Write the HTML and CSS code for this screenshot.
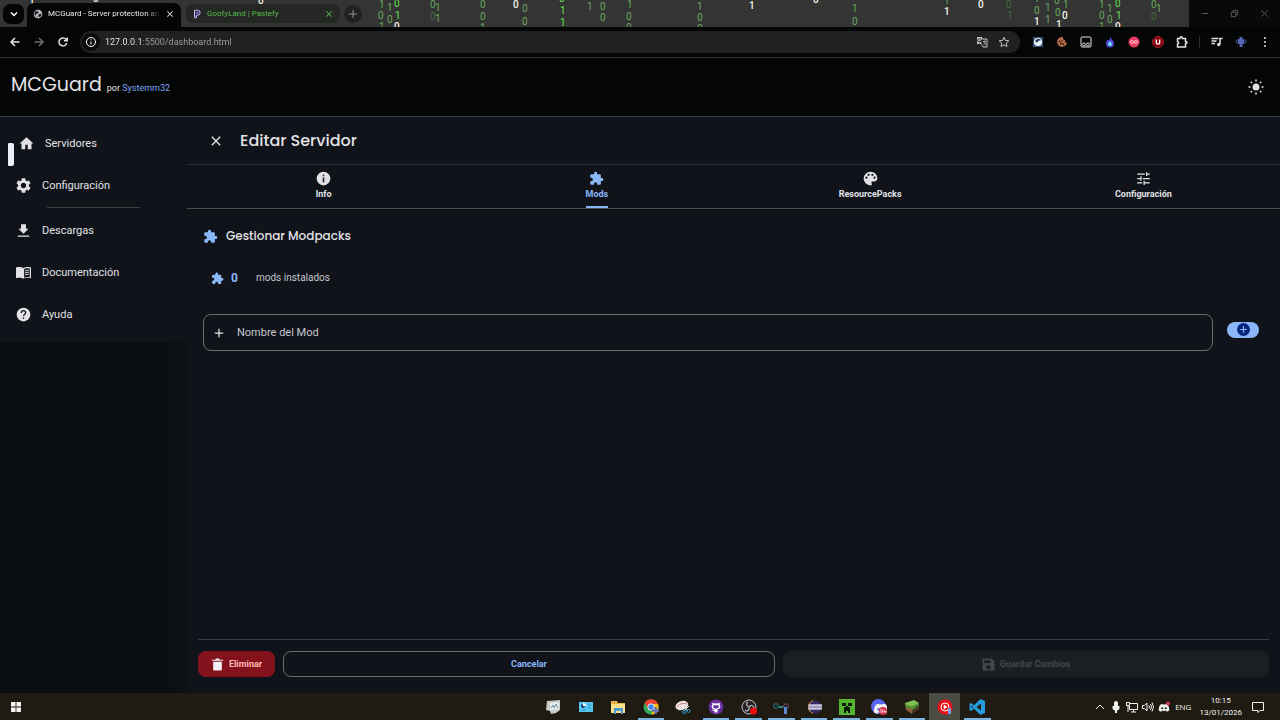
FILE: index.html
```html
<!DOCTYPE html>
<html lang="es">
<head>
    <meta charset="UTF-8">
    <meta name="viewport" content="width=device-width, initial-scale=1.0">
    <title>MCGuard - Server protection</title>
    <link rel="stylesheet" href="styles.css">
</head>
<body>
    <!-- Shared icons -->
    <svg class="sprite" aria-hidden="true">
        <symbol id="puzzle" viewBox="0 0 24 24"><path d="M20.5 11H19V7c0-1.100-.9-2-2-2h-4V3.500C13 2.120 11.880 1 10.500 1S8 2.120 8 3.500V5H4c-1.100 0-1.990.9-1.990 2v3.800H3.500c1.490 0 2.700 1.210 2.700 2.700s-1.210 2.700-2.700 2.700H2V20c0 1.100.9 2 2 2h3.800v-1.500c0-1.490 1.210-2.700 2.700-2.700s2.700 1.210 2.700 2.700V22H17c1.100 0 2-.9 2-2v-4h1.500c1.380 0 2.500-1.120 2.500-2.500S21.880 11 20.500 11z"/></symbol>
        <symbol id="gear" viewBox="2 2 20 20"><path d="M19.140 12.940c.04-.3.06-.61.06-.94 0-.32-.02-.64-.07-.94l2.030-1.580c.18-.14.23-.41.12-.61l-1.920-3.320c-.12-.22-.37-.29-.59-.22l-2.390.96c-.5-.38-1.030-.7-1.620-.94l-.36-2.540c-.04-.24-.24-.41-.48-.41h-3.840c-.24 0-.43.17-.47.41l-.36 2.540c-.59.24-1.130.57-1.620.94l-2.390-.96c-.22-.08-.47 0-.59.22L2.740 8.870c-.12.21-.08.47.12.61l2.030 1.580c-.05.3-.09.63-.09.94s.02.64.07.94l-2.030 1.580c-.18.14-.23.41-.12.61l1.920 3.320c.12.22.37.29.59.22l2.390-.96c.5.38 1.030.7 1.620.94l.36 2.540c.05.24.24.41.48.41h3.840c.24 0 .44-.17.47-.41l.36-2.540c.59-.24 1.130-.56 1.620-.94l2.390.96c.22.08.47 0 .59-.22l1.920-3.320c.12-.22.07-.47-.12-.61l-2.010-1.580zM12 15.600c-1.980 0-3.600-1.620-3.600-3.600s1.620-3.600 3.600-3.600 3.600 1.620 3.600 3.600-1.620 3.600-3.600 3.600z"/></symbol>
        <symbol id="close" viewBox="0 0 24 24"><path d="M19 6.410L17.590 5 12 10.590 6.410 5 5 6.410 10.590 12 5 17.590 6.410 19 12 13.410 17.590 19 19 17.590 13.410 12z"/></symbol>
        <symbol id="discord" viewBox="0 0 24 24"><path d="M19.500 5.300A17 17 0 0 0 15.300 4l-.6 1.200a15 15 0 0 0-5.400 0L8.700 4a17 17 0 0 0-4.200 1.300C1.800 9.300 1.100 13.200 1.500 17a17 17 0 0 0 5.200 2.600l1.200-2-1.800-.9.400-.3a12 12 0 0 0 11 0l.4.3-1.800.9 1.200 2a17 17 0 0 0 5.200-2.600c.4-4.400-.8-8.200-3-11.700zM8.500 14.600a2 2 0 1 1 0-4.200 2 2 0 0 1 0 4.200zm7 0a2 2 0 1 1 0-4.200 2 2 0 0 1 0 4.200z"/></symbol>
    </svg>

    <!-- Browser tabs -->
    <div class="tabstrip">
        <svg class="rain" viewBox="0 0 1280 27" preserveAspectRatio="xMinYMin slice" aria-hidden="true">
            <g class="rain-green">
                <text x="379" y="8">1</text><text x="378" y="19">0</text><text x="379" y="30">1</text>
                <text x="387" y="11">1</text><text x="387" y="23">0</text>
                <text x="430" y="8">0</text><text x="435" y="11">1</text><text x="435" y="22">1</text>
                <text x="480" y="8">0</text><text x="480" y="20">0</text><text x="480" y="31">1</text>
                <text x="522" y="12">0</text><text x="522" y="25">0</text>
                <text x="587" y="10">1</text><text x="600" y="10">0</text><text x="600" y="21">0</text>
                <text x="627" y="8">1</text><text x="626" y="20">0</text><text x="626" y="31">0</text>
                <text x="697" y="10">1</text><text x="697" y="21">0</text><text x="697" y="32">0</text>
                <text x="852" y="12">1</text><text x="852" y="25">0</text><text x="944" y="4">1</text>
                <text x="1034" y="2">1</text><text x="1034" y="14">0</text>
                <text x="1045" y="11">1</text><text x="1045" y="23">1</text>
                <text x="1054" y="4">0</text><text x="1063" y="8">1</text><text x="1055" y="16">0</text>
                <text x="1099" y="8">1</text><text x="1099" y="19">0</text><text x="1099" y="30">1</text>
                <text x="1107" y="12">1</text><text x="1107" y="23">0</text><text x="1151" y="8">0</text><text x="1156" y="12">1</text>
            </g>
            <g class="rain-bright">
                <text x="394" y="7">0</text><text x="395" y="19">1</text><text x="559" y="2">0</text><text x="560" y="14">1</text><text x="560" y="26">1</text>
                <text x="1115" y="7">0</text><text x="1116" y="19">1</text>
            </g>
            <g class="rain-dim">
                <text x="430" y="20">0</text><text x="1006" y="8">0</text><text x="1007" y="19">1</text><text x="1151" y="20">0</text>
            </g>
            <g class="rain-white">
                <text x="29" y="4">1</text><text x="93" y="2">0</text><text x="258" y="4">0</text><text x="394" y="30">0</text><text x="513" y="8">0</text><text x="749" y="9">1</text><text x="813" y="3">0</text>
                <text x="944" y="15">1</text><text x="978" y="8">0</text><text x="1034" y="25">1</text><text x="1062" y="19">0</text><text x="1056" y="28">1</text><text x="1115" y="30">0</text>
            </g>
        </svg>
        <button class="tab-search" aria-label="Buscar pestañas"><svg viewBox="0 0 10 10"><path class="line" d="M2 3.500l3 3 3-3"/></svg></button>
        <div class="tab active">
            <svg class="favicon" viewBox="0 0 16 16"><circle cx="8" cy="8" r="7" fill="#b9bdc1"/><path d="M3 4l4-1 2 2-1 2-3 1-1 3-2-3zM10 8l4-1-1 4-3 2-2-3zM6 11l2 1-1 2z" fill="#202124"/></svg>
            <span class="tab-title">MCGuard - Server protection an</span>
            <button aria-label="Cerrar pestaña"><svg viewBox="0 0 24 24"><use href="#close"/></svg></button>
        </div>
        <div class="tab pastefy">
            <svg class="favicon" viewBox="0 0 16 16"><path d="M4 14V2h5a4 4 0 0 1 0 8H7v4z" fill="#34265c" stroke="#d9c9ff" stroke-width="1.500"/><path d="M7 7V5h2a1 1 0 0 1 0 2z" fill="#d9c9ff"/></svg>
            <span class="tab-title">GoofyLand | Pastefy</span>
            <button aria-label="Cerrar pestaña"><svg viewBox="0 0 24 24"><use href="#close"/></svg></button>
        </div>
        <button class="new-tab" aria-label="Nueva pestaña"><svg viewBox="0 0 10 10"><path class="line thin" d="M5 1v8M1 5h8"/></svg></button>
        <div class="window-controls">
            <button aria-label="Minimizar"><svg viewBox="0 0 10 10"><path class="line thin" d="M2 5h7"/></svg></button>
            <button aria-label="Restaurar"><svg viewBox="0 0 10 10"><path class="line thin" d="M1.500 3.500h5v5h-5zM3.500 3.500v-2h5v5h-2"/></svg></button>
            <button aria-label="Cerrar"><svg viewBox="0 0 10 10"><path class="line thin" d="M1.500 1.500l7 7M8.500 1.500l-7 7"/></svg></button>
        </div>
    </div>

    <!-- Browser toolbar -->
    <div class="toolbar">
        <button aria-label="Atrás"><svg viewBox="0 0 12 12"><path class="line" d="M10.500 6H2M6 2L2 6l4 4"/></svg></button>
        <button class="muted" aria-label="Adelante"><svg viewBox="0 0 12 12"><path class="line" d="M1.500 6H10M6 2l4 4-4 4"/></svg></button>
        <button aria-label="Recargar"><svg viewBox="0 0 12 12"><path class="line" d="M9.800 7A4 4 0 1 1 9 3.300L10 4.500M10.200 1.500v3.200H7"/></svg></button>
        <div class="omnibox">
            <button class="site-info" aria-label="Información del sitio"><svg viewBox="0 0 12 12"><circle class="line thin" cx="6" cy="6" r="4.500"/><path class="line thin" d="M6 5.500v3M6 3.300v1"/></svg></button>
            <input type="text" aria-label="Dirección" value="127.0.0.1:5500/dashboard.html">
            <button aria-label="Traducir"><svg viewBox="0 0 12 12"><path d="M1 1h5l1 7H1z" fill="#c4c7c5"/><path d="M5 3h6v8H7L5.500 8.500" fill="#202124" stroke="#c4c7c5"/><path d="M4.800 3.500A1.700 1.700 0 1 0 5 5H3.500" fill="none" stroke="#202124"/><path d="M7 5.500h3M8.500 4.500v1M9.500 5.500C9.300 7 8.500 8 7.500 8.500M7.600 6.500L9.800 9" fill="none" stroke="#c4c7c5" stroke-width=".8"/></svg></button>
            <button aria-label="Marcador"><svg viewBox="0 0 12 12"><path class="line thin" d="M6 1.300l1.400 3.100 3.400.4-2.500 2.300.7 3.400L6 8.800l-3 1.700.7-3.400L1.200 4.800l3.400-.4z"/></svg></button>
        </div>
        <div class="extensions">
            <button aria-label="Extensión 1"><svg viewBox="0 0 12 12"><rect x="1" y="1" width="10" height="10" fill="#35527f"/><circle cx="6" cy="6" r="4" fill="#eef3f9"/><path d="M3 5c2-3 5-2 6-1-1 1-3 0-3 2-1 1-2 0-3-1z" fill="#1f3558"/></svg></button>
            <button aria-label="Cookies"><svg viewBox="0 0 12 12"><path d="M7 1a5 5 0 1 0 4 6L9 6V4L7 3z" fill="#b56a4b"/><path d="M3 5l2 1M6 7l2 2M4 8.500L5 7M6 4v1" stroke="#3a1b10" stroke-width="1.300"/></svg></button>
            <button aria-label="Extensión 3"><svg viewBox="0 0 12 12"><rect class="line thin" x="1" y="1" width="10" height="10" rx="1"/><circle class="line thin" cx="4" cy="8.500" r="1.500"/><circle class="line thin" cx="8" cy="8.500" r="1.500"/></svg></button>
            <button aria-label="Extensión 4"><svg viewBox="0 0 12 12"><path d="M6 .5c1 3 4 4 4 7a4 4 0 0 1-8 0c0-2 1-2 1-4l2 1c1-1 1-2 1-4z" fill="#5148d8"/><path d="M6 5l2 3a2 2 0 0 1-4 0z" fill="#71e8f5"/></svg></button>
            <button aria-label="Extensión 5"><svg viewBox="0 0 12 12"><circle cx="6" cy="6" r="5.500" fill="#e8395f"/><circle cx="4" cy="6" r="1.500" fill="none" stroke="#ffc3ce"/><circle cx="8" cy="6" r="1.500" fill="none" stroke="#ffc3ce"/></svg></button>
            <button aria-label="uBlock"><svg viewBox="0 0 12 12"><path d="M4 .5h4L11.500 4v4L8 11.500H4L.5 8V4z" fill="#8c0712" stroke="#c03a42" stroke-width=".5"/><path d="M4.300 3.500v3a1.700 1.700 0 0 0 3.400 0v-3" fill="none" stroke="#fff" stroke-width="1.300"/></svg></button>
            <button aria-label="Extensiones"><svg viewBox="0 0 12 12"><path class="line" d="M1.500 2.500h2.500C4 .3 6.500.3 6.500 2.500h3V5.500c2 0 2 2 0 2V11h-8V8c1.500 0 1.500-2.500 0-2.500z"/></svg></button>
            <span class="separator"></span>
            <button aria-label="Multimedia"><svg viewBox="0 0 12 12"><path class="line" d="M.5 2.500h7M.5 5h5M.5 7.500H4M9 8V2.500h2.500"/><circle cx="7.800" cy="8.500" r="1.700"/></svg></button>
            <button aria-label="Perfil"><svg viewBox="0 0 12 12"><path d="M4.500 1h3v10h-3zM3 3.500h6v4H3z" fill="#5968b8"/><ellipse cx="6" cy="5.500" rx="5.300" ry="2" fill="none" stroke="#5364b5"/></svg></button>
            <button aria-label="Menú"><svg viewBox="0 0 12 12"><circle cx="6" cy="2" r="1"/><circle cx="6" cy="6" r="1"/><circle cx="6" cy="10" r="1"/></svg></button>
        </div>
    </div>

    <!-- App -->
    <header class="app-header">
        <h1>MCGuard</h1>
        <p>por <a href="#">Systemm32</a></p>
        <button class="theme-toggle" aria-label="Cambiar tema"><svg viewBox="0 0 16 16"><circle cx="8" cy="8" r="3.500"/><path class="line" d="M8 .5v2M8 13.500v2M.5 8h2M13.500 8h2M2.700 2.700l1.300 1.300M12 12l1.300 1.300M2.700 13.300L4 12M12 4l1.300-1.300"/></svg></button>
    </header>

    <div class="app">
        <aside class="sidebar">
            <nav>
                <a href="#" class="current"><svg viewBox="0 0 24 24"><path d="M10 21v-7h4v7h6v-9h3L12 2 1 12h3v9z"/></svg>Servidores</a>
                <a href="#"><svg viewBox="0 0 24 24"><use href="#gear"/></svg>Configuración</a>
                <hr>
                <a href="#"><svg viewBox="0 0 24 24"><path d="M20 9h-4V2H8v7H4l8 8zM3 20v2h18v-2z"/></svg>Descargas</a>
                <a href="#"><svg viewBox="0 0 24 24"><path d="M12 5C9 3 4 3 0 4v17c4-1 9-1 12 1 3-2 8-2 12-1V4c-4-1-9-1-12 1z"/><path d="M13 6.500c2-1.200 5-1.500 9-1v13.700c-4-.4-7-.1-9 1z" fill="#10131a"/><path d="M14.500 9.500q3-1.500 6-1M14.500 12.700q3-1.500 6-1M14.500 16q3-1.500 6-1" fill="none" stroke="currentColor" stroke-width="1.600"/></svg>Documentación</a>
                <a href="#"><svg viewBox="0 0 24 24"><circle cx="12" cy="12" r="11"/><path d="M8.500 9.500c0-5 7-4.500 7-.5 0 2.500-3.400 2.800-3.400 5.500M12 16.500v2.300" fill="none" stroke="#10131a" stroke-width="2"/></svg>Ayuda</a>
            </nav>
        </aside>

        <main>
            <div class="dialog-title">
                <button aria-label="Cerrar"><svg viewBox="0 0 24 24"><use href="#close"/></svg></button>
                <h2>Editar Servidor</h2>
            </div>
            <div class="tabs" role="tablist">
                <button role="tab"><svg viewBox="0 0 24 24"><path d="M12 1a11 11 0 1 0 0 22 11 11 0 0 0 0-22zm1.200 17h-2.400v-7.500h2.400zm0-9.500h-2.400V6h2.400z"/></svg><span>Info</span></button>
                <button role="tab" class="selected" aria-selected="true"><svg viewBox="0 0 24 24"><use href="#puzzle"/></svg><span>Mods</span></button>
                <button role="tab"><svg viewBox="0 0 24 24"><path d="M12 1a11 11 0 0 0 0 22c1.800 0 2.800-1.800 1.800-3.200-1-1.500 0-3.100 1.800-3.100H18c2.800 0 5-2.200 5-5C23 5.500 18 1 12 1zM5.500 12.500a1.800 1.800 0 1 1 0-3.600 1.800 1.800 0 0 1 0 3.600zM9 7.800a1.800 1.800 0 1 1 0-3.600 1.800 1.800 0 0 1 0 3.600zm6 0a1.800 1.800 0 1 1 0-3.600 1.800 1.800 0 0 1 0 3.600zm3.500 4.700a1.800 1.800 0 1 1 0-3.600 1.800 1.800 0 0 1 0 3.600z"/></svg><span>ResourcePacks</span></button>
                <button role="tab"><svg viewBox="0 0 24 24"><path d="M2 4h12v2H2zM16 2h2v2h4v2h-4v2h-2zM2 11h5V8.500h2v7H7V13H2zM11 11h11v2H11zM2 18h8v2H2zM12 15.500h2V18h8v2h-8v2.500h-2z"/></svg><span>Configuración</span></button>
            </div>

            <section class="modpacks">
                <h3><svg viewBox="0 0 24 24"><use href="#puzzle"/></svg>Gestionar Modpacks</h3>
                <p class="stat"><svg viewBox="0 0 24 24"><use href="#puzzle"/></svg><strong>0</strong><span>mods instalados</span></p>
                <div class="add-mod">
                    <label class="field">
                        <svg viewBox="0 0 12 12"><path class="line" d="M6 1v10M1 6h10"/></svg>
                        <input type="text" placeholder="Nombre del Mod" aria-label="Nombre del Mod">
                    </label>
                    <button aria-label="Añadir mod"><svg viewBox="0 0 14 14"><circle cx="7" cy="7" r="7"/><path d="M7 3.500v7M3.500 7h7" stroke="#8ab8fa" stroke-width="1.300"/></svg></button>
                </div>
            </section>

            <div class="actions">
                <button class="delete"><svg viewBox="0 0 24 24"><path d="M4 7h16v14a2 2 0 0 1-2 2H6a2 2 0 0 1-2-2zM2 3h6l1-2h6l1 2h6v2H2z"/></svg>Eliminar</button>
                <button class="cancel">Cancelar</button>
                <button class="save" disabled><svg viewBox="0 0 24 24"><path d="M1 1h17l5 5v17H1zM4 4v5h12V4zm8 9a4 4 0 1 0 0 8 4 4 0 0 0 0-8z"/></svg>Guardar Cambios</button>
            </div>
        </main>
    </div>

    <!-- Windows taskbar -->
    <footer class="taskbar">
        <button class="start" aria-label="Inicio"><svg viewBox="0 0 12 12"><path d="M1 1h4.600v4.600H1zM6.400 1H11v4.600H6.400zM1 6.400h4.600V11H1zM6.400 6.400H11V11H6.400z"/></svg></button>
        <div class="apps">
            <button aria-label="Monitor"><svg viewBox="0 0 16 16"><path d="M2 2l13-1v10l-4 3-5 1-1-3-4-1z" fill="#c9cbc7"/><path d="M5 4l9-1v7l-9 1z" fill="#e8edef"/><path d="M6 9l2-3 1 3 2-4 2 4" fill="none" stroke="#7398a9"/></svg></button>
            <button aria-label="Panel"><svg viewBox="0 0 16 16"><path d="M1 3h14v10H1z" fill="#58c6ee"/><circle cx="5" cy="7" r="2" fill="#163d69"/><path d="M5 7V4a3 3 0 0 1 3 3z" fill="#fff"/><path d="M10 6h3M10 9h3M3 11h5" stroke="#2b93c4"/></svg></button>
            <button aria-label="Explorador"><svg viewBox="0 0 16 16"><path d="M1 2h6l1 2h7v10H1z" fill="#e5b445"/><path d="M1 5h14v9H1z" fill="#ffe08a"/><path d="M4 9h9v6h-2v-3H6v3H4z" fill="#4a9bd1"/></svg></button>
            <button class="open" aria-label="Chrome"><svg viewBox="0 0 16 16"><circle cx="8" cy="8" r="7.500" fill="#34a853"/><path d="M1.500 4A7.500 7.500 0 0 1 15 5H8L5 9z" fill="#ea4335"/><path d="M15 5a7.500 7.500 0 0 1-7 10.500L11 9V5z" fill="#fbbc05"/><circle cx="8" cy="8" r="3.500" fill="#fff"/><circle cx="8" cy="8" r="2.700" fill="#4285f4"/><path d="M9 11.500h7M12.500 8v7" stroke="#6974b8" stroke-width="2.500"/></svg></button>
            <button aria-label="Recortes"><svg viewBox="0 0 16 16"><ellipse cx="7" cy="6.500" rx="6.500" ry="4.500" fill="#eee3e4" transform="rotate(-18 7 7)"/><path d="M2 8c3-4 7-4 10-3" fill="none" stroke="#cf7c80"/><path d="M8 8l5 4M14 7l-5 5" stroke="#ddd"/><circle cx="9" cy="13" r="1.500" fill="none" stroke="#2c9bd0"/><circle cx="13.500" cy="12" r="1.500" fill="none" stroke="#2c9bd0"/></svg></button>
            <button class="open" aria-label="GitHub"><svg viewBox="0 0 16 16"><circle cx="8" cy="8" r="7.500" fill="#672e9c"/><path d="M4.500 3.500l2 1a6 6 0 0 1 3 0l2-1 .3 2.300c1.500 2.500-.3 4.500-2.300 4.700v3h-3v-1.500c-2 .3-2-1.200-2.700-1.500 1.300-.2 1.500.8 2.700.5v-.5C4.300 10.200 2.800 8 4.200 5.800z" fill="#fff"/><path d="M5.500 6.500c1-.5 4-.5 5 0 1 2.500-1 3-2.500 3S4.500 9 5.500 6.500z" fill="#672e9c"/></svg></button>
            <button class="open" aria-label="OBS"><svg viewBox="0 0 16 16"><circle cx="8" cy="8" r="7" fill="#242124" stroke="#c9c5c5"/><path d="M8 8C5 7 5 4 7 3M8 8c2-3 5-1 5 1M8 8c1 3-2 5-4 3" fill="none" stroke="#a9a5a5" stroke-width="1.500"/><circle cx="12.500" cy="12" r="3.500" fill="#f40c0c"/></svg></button>
            <button class="open" aria-label="Editor"><svg viewBox="0 0 16 16"><circle cx="3" cy="7" r="2.300" fill="none" stroke="#267f8b"/><path d="M6 8h4" stroke="#39b5a5" stroke-width="1.500"/><circle cx="13" cy="7" r="2.300" fill="none" stroke="#7a4a8c"/><path d="M11 8h3v7h-3z" fill="#5e8bd0"/></svg></button>
            <button class="open" aria-label="Eclipse"><svg viewBox="0 0 16 16"><circle cx="9" cy="8" r="6.500" fill="#352c68"/><path d="M7 1.500a7 7 0 0 0 0 13" fill="none" stroke="#df913c"/><path d="M2.500 6.500H16M2.500 9.500H16" stroke="#c8c4da" stroke-width="2.500"/></svg></button>
            <button class="open" aria-label="Launcher"><svg viewBox="0 0 16 16"><path d="M0 0h16v16H0z" fill="#55b52f"/><path d="M3 4h4v3H3zM9 4h4v3H9zM7 7h2v1h2v6H9v-2H7v2H5V8h2z" fill="#0b1c0b"/></svg></button>
            <button class="open" aria-label="Discord"><svg viewBox="0 0 16 16"><circle cx="7.500" cy="7.500" r="7.500" fill="#5865f2"/><svg x="2" y="2" width="11" height="11" viewBox="0 0 24 24" fill="#fff"><use href="#discord"/></svg><circle cx="12" cy="12" r="4" fill="#d93246"/><text class="badge" x="9" y="14">9+</text></svg></button>
            <button class="open" aria-label="Minecraft"><svg viewBox="0 0 16 16"><path d="M1 4l9-3 5 3-5 4-9-1z" fill="#7bc253"/><path d="M1 5l7 3v7l-6-4z" fill="#8a6040"/><path d="M8 8l7-4v6l-7 5z" fill="#4d3826"/><path d="M1 5l7 3v2L6 9v1L3 8v1L1 7zM8 8l7-4v2l-2 2v-1l-3 3-2 1z" fill="#4f9132"/></svg></button>
            <button class="open focused" aria-label="YouTube Music"><svg viewBox="0 0 16 16"><circle cx="8" cy="8" r="7.500" fill="#ed0f18"/><circle cx="8" cy="8" r="4" fill="none" stroke="#fff"/><path d="M6.700 5.500L10.500 8l-3.800 2.500z" fill="#fff"/><path d="M11 9h3v6h-3z" fill="#7b9bdc"/></svg></button>
            <button class="open" aria-label="VS Code"><svg viewBox="0 0 16 16"><path d="M11.500 0L16 2v12l-4.500 2L5 9.700 2 12 .5 11.200V4.800L2 4l3 2.300zM12 4.500L7.500 8l4.500 3.500z" fill="#269bdd"/><path d="M2.500 6.500v3L4 8z" fill="#17180f"/></svg></button>
        </div>
        <div class="tray">
            <button aria-label="Iconos ocultos"><svg viewBox="0 0 12 12"><path class="line thin" d="M2 8l4-4 4 4"/></svg></button>
            <button aria-label="Micrófono"><svg viewBox="0 0 12 12"><rect x="4" y="0" width="4" height="8" rx="2"/><path d="M2.500 5v2q0 2 2.500 2.500V12h2V9.500Q9.500 9 9.500 7V5z"/></svg></button>
            <button aria-label="Red"><svg viewBox="0 0 12 12"><path class="line thin" d="M3.500 2.500h8v6h-8V5M5 11h5M7.500 8.500V11M.5 1.500h3v3h-3zM2 4.500V11"/></svg></button>
            <button aria-label="Volumen"><svg viewBox="0 0 12 12"><path class="line thin" d="M.5 4.500h2L5 2v8L2.500 7.500h-2zM7 4.500q1 1.500 0 3M8.500 3q2 3 0 6M10 1.500q3 4.500 0 9"/></svg></button>
            <button aria-label="Discord"><svg viewBox="0 0 12 12"><svg x="0" y="1" width="11" height="11" viewBox="0 0 24 24"><use href="#discord"/></svg><circle cx="10" cy="2.500" r="2" fill="#e0344d"/></svg></button>
            <span class="lang">ENG</span>
            <time class="clock" datetime="2026-01-13T10:15">10:15<br>13/01/2026</time>
            <button class="notifications" aria-label="Notificaciones"><svg viewBox="0 0 12 12"><path class="line thin" d="M.5 1.500h11v8H8l-2 2v-2H.5z"/></svg></button>
        </div>
    </footer>
</body>
</html>
```

FILE: styles.css
```css
/* Base */
* {
    box-sizing: border-box;
}
body {
    margin: 0;
    min-height: 100vh;
    display: flex;
    flex-direction: column;
    background-color: #10131a;
    color: #e2e2e6;
    font-family: Roboto, sans-serif;
    font-size: 11px;
}
button {
    padding: 0;
    border: none;
    background: none;
    color: inherit;
    font: inherit;
    cursor: pointer;
    display: flex;
    align-items: center;
    justify-content: center;
}
svg {
    display: block;
    fill: currentColor;
    flex-shrink: 0;
}
input {
    border: none;
    outline: none;
    padding: 0;
    background: none;
    font: inherit;
    min-width: 0;
}
a {
    color: inherit;
    text-decoration: none;
}
h1, h2, h3, p {
    margin: 0;
}
h1, h2, h3 {
    font-family: Poppins, Inter, sans-serif;
    font-weight: 500;
}
.sprite {
    position: absolute;
    width: 0;
    height: 0;
}
.line {
    fill: none;
    stroke: currentColor;
    stroke-width: 1.5;
}
.line.thin {
    stroke-width: 1;
}

/* Browser tabs */
.tabstrip {
    position: relative;
    height: 27px;
    display: flex;
    align-items: center;
    padding-left: 3px;
    background-color: #343434;
    overflow: hidden;
    font-size: 8px;
}
.rain {
    position: absolute;
    top: 0;
    left: 0;
    width: 100%;
    height: 27px;
    font-size: 10px;
}
.rain-green {
    fill: #69a85c;
}
.rain-bright {
    fill: #62e350;
}
.rain-dim {
    fill: #466b42;
}
.rain-white {
    fill: #f4f6e4;
    font-weight: 500;
}
.tabstrip > button,
.tab,
.window-controls {
    position: relative;
}
.tab-search {
    width: 21px;
    height: 20px;
    border-radius: 7px;
    background-color: #050505;
    color: #ffffff;
}
.tab-search svg,
.new-tab svg {
    width: 10px;
    height: 10px;
}
.tab {
    display: flex;
    align-items: center;
    gap: 5px;
    width: 154px;
    height: 19px;
    margin-left: 3px;
    padding: 0 6px;
    border-radius: 7px;
}
.tab.active {
    align-self: flex-end;
    height: 24px;
    padding-bottom: 3px;
    border-radius: 7px 7px 0 0;
    background-color: #040505;
    color: #e8eaed;
}
.tab.pastefy {
    background-color: #252725;
    color: #54b948;
    margin-left: 5px;
}
.tab-title {
    flex: 1;
    overflow: hidden;
    white-space: nowrap;
}
.tab.active .tab-title {
    mask-image: linear-gradient(to right, #000 88%, transparent);
}
.favicon,
.tab button svg {
    width: 10px;
    height: 10px;
}
.new-tab {
    width: 18px;
    height: 18px;
    margin-left: 4px;
    border-radius: 50%;
    background-color: #202220;
    color: #8f938f;
}
.window-controls {
    margin-left: auto;
    display: flex;
    justify-content: space-around;
    width: 91px;
    height: 27px;
    background-color: #080a09;
    color: #5e6260;
}
.window-controls svg {
    width: 9px;
    height: 9px;
}

/* Browser toolbar */
.toolbar {
    display: flex;
    align-items: center;
    height: 31px;
    padding: 0 9px 0 8px;
    background-color: #040505;
    border-bottom: 1px solid #303233;
    color: #e3e3e3;
}
.toolbar svg {
    width: 12px;
    height: 12px;
}
.toolbar > button {
    width: 14px;
    margin-right: 10px;
}
.toolbar .muted {
    color: #6b6d6f;
}
.omnibox {
    flex: 1;
    display: flex;
    align-items: center;
    gap: 10px;
    height: 22px;
    padding: 0 10px 0 2px;
    border-radius: 11px;
    background-color: #202123;
    color: #c4c7c5;
}
/* host in white, rest of the url in grey */
.omnibox input {
    flex: 1;
    font-size: 9px;
    color: transparent;
    background: linear-gradient(to right, #f0f1f2 38px, #a0a3a5 38px);
    background-clip: text;
}
.site-info {
    width: 18px;
    height: 18px;
    margin-right: -5px;
    border-radius: 50%;
    background-color: #0a0b0c;
    color: #ffffff;
}
.extensions {
    display: flex;
    align-items: center;
    gap: 12px;
    margin-left: 12px;
}
.extensions .separator {
    width: 1px;
    height: 12px;
    margin-right: -1px;
    margin-left: -1px;
    background-color: #2c2e30;
}

/* App header */
.app-header {
    display: flex;
    align-items: baseline;
    gap: 5px;
    padding: 15px 16px 19px 11px;
    background-color: #040505;
    border-bottom: 1px solid #393b3f;
}
h1 {
    font-size: 19px;
    line-height: 24px;
    font-weight: 400;
}
.app-header p {
    font-size: 9px;
}
.app-header a {
    color: #7da6f5;
}
.theme-toggle {
    align-self: center;
    margin: 4px 0 0 auto;
}
.theme-toggle svg {
    width: 16px;
    height: 16px;
}

/* Sidebar */
.app {
    flex: 1;
    display: flex;
}
.sidebar {
    width: 187px;
    background: linear-gradient(to right, #0b0f12 90%, #0d1015);
}
nav {
    padding: 5px 0 7px;
    background-color: #10131a;
}
nav a {
    position: relative;
    display: flex;
    align-items: center;
    gap: 11px;
    height: 42px;
    padding-left: 16px;
}
nav a svg {
    width: 15px;
    height: 15px;
}
nav .current {
    padding-left: 19px;
}
nav .current::before {
    content: "";
    position: absolute;
    left: 8px;
    bottom: -2px;
    width: 6px;
    height: 23px;
    border-radius: 1px 2px 2px 1px;
    background-color: #e9f0fc;
}
nav hr {
    width: 93px;
    height: 1px;
    margin: 1px 0 1px 47px;
    border: none;
    background-color: #3d4044;
}

/* Edit server */
main {
    flex: 1;
    min-width: 0;
    display: flex;
    flex-direction: column;
}
.dialog-title {
    display: flex;
    align-items: center;
    gap: 16px;
    height: 48px;
    padding-left: 21px;
    border-bottom: 1px solid #292c32;
}
.dialog-title svg {
    width: 16px;
    height: 16px;
}
h2 {
    font-size: 16px;
}
.tabs {
    display: flex;
    height: 44px;
    border-bottom: 1px solid #4b4d51;
}
.tabs button {
    flex: 1;
    flex-direction: column;
    font-size: 9px;
    font-weight: 700;
    line-height: 12px;
}
.tabs svg {
    width: 15px;
    height: 15px;
    margin: 6px 0 2px;
}
.tabs span {
    padding-bottom: 6px;
    border-bottom: 2px solid transparent;
}
.tabs .selected {
    color: #8ab8fa;
}
.tabs .selected span {
    border-color: #8ab8fa;
}
.modpacks {
    flex: 1;
    padding: 18px 21px 0 16px;
}
h3 {
    display: flex;
    align-items: center;
    gap: 8px;
    font-size: 12px;
    line-height: 18px;
}
h3 svg {
    width: 15px;
    height: 15px;
    color: #8ab8fa;
}
.stat {
    display: flex;
    align-items: center;
    margin: 24px 0 27px 8px;
    font-size: 10px;
    line-height: 18px;
}
.stat svg {
    width: 13px;
    height: 13px;
    color: #8ab8fa;
}
.stat strong {
    width: 25px;
    margin-left: 7px;
    font-size: 12px;
    font-weight: 700;
    color: #8ab8fa;
}
.stat span {
    color: #c4c6cd;
}
.add-mod {
    display: flex;
    align-items: center;
    gap: 14px;
}
.field {
    flex: 1;
    display: flex;
    align-items: center;
    gap: 13px;
    height: 37px;
    padding: 0 10px;
    border: 1px solid #6a6c70;
    border-radius: 8px;
}
.field svg {
    width: 10px;
    height: 10px;
}
.field input {
    flex: 1;
    color: #e2e2e6;
}
.field input::placeholder {
    color: #c4c6cd;
}
.add-mod button {
    width: 32px;
    height: 16px;
    margin-bottom: 6px;
    border-radius: 8px;
    background-color: #8ab8fa;
    color: #06267d;
}
.add-mod button svg {
    width: 13px;
    height: 13px;
}
.actions {
    display: flex;
    gap: 8px;
    margin: 0 11px;
    padding: 11px 0 16px;
    border-top: 1px solid #393c42;
}
.actions button {
    gap: 5px;
    height: 26px;
    border-radius: 8px;
    font-size: 9px;
    font-weight: 700;
}
.actions svg {
    width: 13px;
    height: 13px;
}
.delete {
    width: 77px;
    background-color: #83121c;
    color: #ffb9b4;
}
.delete svg {
    color: #f1f1f6;
}
.cancel {
    flex: 1;
    padding: 0 12px;
}
.actions .delete {
    background-color: #83121c;
    color: #ffb9b4;
}
.actions .cancel {
    border: 1px solid #6a6c70;
    color: #8ab8fa;
}
.save {
    flex: 1;
    padding: 0 10px;
}
.actions .save {
    background-color: #1b1f24;
    color: #43474c;
}

/* Taskbar */
.taskbar {
    display: grid;
    grid-template-columns: 42% 456px 1fr;
    height: 27px;
    background-color: #1f1b12;
    color: #f2f2f0;
}
.start {
    width: 32px;
}
.start svg {
    width: 12px;
    height: 12px;
}
.apps {
    display: grid;
    grid-template-columns: repeat(14, 1fr);
    margin-left: -1px;
}
.apps button {
    border-top: 2px solid transparent;
    border-bottom: 2px solid transparent;
    background-clip: padding-box;
}
.apps svg {
    width: 16px;
    height: 16px;
}
.apps .open {
    border-bottom-color: #79b3df;
    margin: 0 3px;
}
.apps .focused {
    margin: 0 1px;
    border-bottom-color: #4b4b44;
    background: #4b4b44;
}
.badge {
    fill: #ffffff;
    font-size: 6px;
}
.tray {
    display: flex;
    align-items: center;
    justify-content: flex-end;
    gap: 4px;
    padding-right: 16px;
    font-family: "Open Sans", sans-serif;
    font-size: 8px;
}
.tray svg {
    width: 12px;
    height: 12px;
}
.lang {
    margin-left: 1px;
}
.clock {
    font-family: Roboto, sans-serif;
    line-height: 12px;
    text-align: center;
    margin: 0 4px;
}
.notifications {
    margin-left: 2px;
}
```
